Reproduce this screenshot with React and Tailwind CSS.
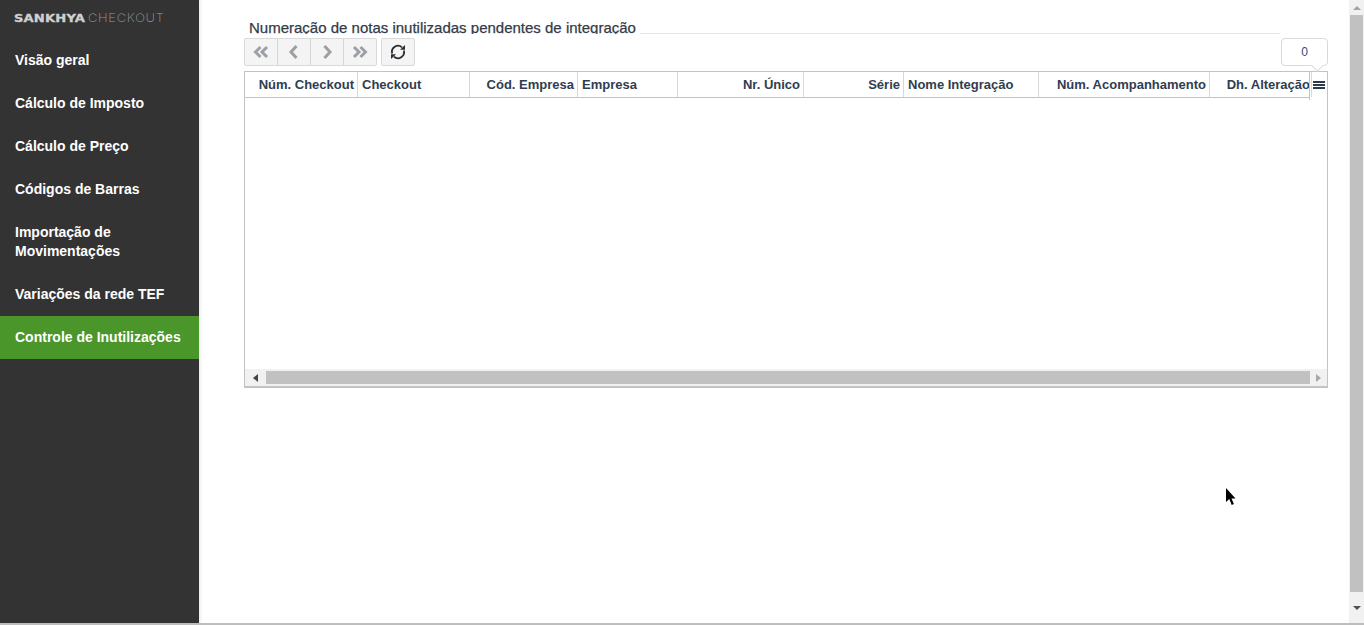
import React from 'react';

const navItems = [
  { label: 'Visão geral' },
  { label: 'Cálculo de Imposto' },
  { label: 'Cálculo de Preço' },
  { label: 'Códigos de Barras' },
  { label: 'Importação de Movimentações' },
  { label: 'Variações da rede TEF' },
  { label: 'Controle de Inutilizações', active: true },
];

const columns = [
  { label: 'Núm. Checkout', width: 'w-[113px]', align: 'text-right pr-[3px]' },
  { label: 'Checkout', width: 'w-[112px]', align: 'text-left pl-[4px]' },
  { label: 'Cód. Empresa', width: 'w-[108px]', align: 'text-right pr-[3px]' },
  { label: 'Empresa', width: 'w-[100px]', align: 'text-left pl-[4px]' },
  { label: 'Nr. Único', width: 'w-[126px]', align: 'text-right pr-[3px]' },
  { label: 'Série', width: 'w-[100px]', align: 'text-right pr-[3px]' },
  { label: 'Nome Integração', width: 'w-[135px]', align: 'text-left pl-[4px]' },
  { label: 'Núm. Acompanhamento', width: 'w-[171px]', align: 'text-right pr-[3px]' },
  { label: 'Dh. Alteração', width: 'w-[102px]', align: 'text-right pr-[1px]' },
];

const Chevron = ({ dir, double }) => (
  <svg width="18" height="16" viewBox="0 0 18 16" fill="none" stroke="#9c9fa3" strokeWidth="3" className={dir === 'left' ? '' : 'rotate-180'}>
    <path d={double ? 'M8.5 3 3.5 8l5 5' : 'M11.5 2 6 8l5.5 6'} />
    {double && <path d="M15 3 10 8l5 5" />}
  </svg>
);

const SyncIcon = () => (
  <svg width="16" height="16" viewBox="0 0 16 16" fill="none">
    <path d="M2.2 9.5A6 6 0 0 1 12 3.4" stroke="#2a2d33" strokeWidth="1.8" />
    <path d="M13.8 6.5A6 6 0 0 1 4 12.6" stroke="#2a2d33" strokeWidth="1.8" />
    <path d="M10 5.8h5V.9z" fill="#2a2d33" />
    <path d="M6 10.2H1v4.9z" fill="#2a2d33" />
  </svg>
);

const PageButton = ({ children, last }) => (
  <button className={`${last ? 'w-[32px]' : 'w-[33px] border-r border-[#d6d6d6]'} h-full flex items-center justify-center`}>
    {children}
  </button>
);

const Sidebar = () => (
  <aside className="w-[199px] shrink-0 bg-[#333333] shadow-[2px_0_3px_rgba(0,0,0,0.07)] flex flex-col">
    <div className="h-[39px] pl-[14px] pt-[11px] flex items-start leading-[14px]">
      <span className="inline-block w-[74px] origin-left scale-x-[1.25] font-['DejaVu_Sans',sans-serif] font-bold text-[10.5px] text-[#d0d0d0] tracking-[0.1px] [-webkit-text-stroke:0.3px_#d0d0d0]">SANKHYA</span>
      <span className="inline-block w-[76px] origin-left scale-x-[1.13] font-['Inter',sans-serif] font-extralight text-[#9a9a9a] tracking-[0.6px] text-[11.5px]">CHECKOUT</span>
    </div>
    <nav className="flex flex-col">
      {navItems.map((item) => (
        <a
          key={item.label}
          className={`px-[15px] py-[12px] text-[14px] leading-[19px] font-bold text-white ${item.active ? 'bg-[#4b962b]' : ''}`}
        >
          {item.label}
        </a>
      ))}
    </nav>
  </aside>
);

const Toolbar = () => (
  <div className="flex items-start justify-between mt-[4px] h-[33px]">
    <div className="flex gap-[4px]">
      <div className="h-[28px] flex bg-[#f4f4f4] border border-[#d9d9d9] rounded-[2px]">
        <PageButton><Chevron dir="left" double /></PageButton>
        <PageButton><Chevron dir="left" /></PageButton>
        <PageButton><Chevron dir="right" /></PageButton>
        <PageButton last><Chevron dir="right" double /></PageButton>
      </div>
      <button className="w-[34px] h-[28px] flex items-center justify-center bg-[#f4f4f4] border border-[#d9d9d9] rounded-[2px]">
        <SyncIcon />
      </button>
    </div>
    <div className="relative w-[47px] h-[28px] flex items-center justify-center bg-white border border-[#d9d9d9] rounded-[4px] text-[12px] text-[#2d4a7c]">
      0
      <span className="absolute -bottom-[5px] right-[5px] w-[9px] h-[9px] bg-white border-r border-b border-[#d9d9d9] rotate-45" />
    </div>
  </div>
);

const Grid = () => (
  <div className="h-[317px] border border-b-2 border-[#bfc4c8] flex flex-col">
    <div className="flex h-[26px] shrink-0">
      <div className="w-[1065px] flex border-b border-[#c4c4c4]">
        {columns.map((col) => (
          <div
            key={col.label}
            className={`${col.width} shrink-0 border-r border-[#d8d8d8] leading-[25px] text-[13px] font-bold text-[#2f3d4f] whitespace-nowrap ${col.align}`}
          >
            {col.label}
          </div>
        ))}
      </div>
      <div className="relative flex-1 flex items-center justify-center border-l border-[#c4c4c4] h-[28px] -ml-px">
        <div className="flex flex-col gap-[1px] -mt-[2px]">
          <span className="block w-[12px] h-[2px] bg-[#2b3a4d]" />
          <span className="block w-[12px] h-[2px] bg-[#2b3a4d]" />
          <span className="block w-[12px] h-[2px] bg-[#2b3a4d]" />
        </div>
      </div>
    </div>
    <div className="flex-1" />
    <div className="h-[17px] bg-[#f1f1f1] flex items-center">
      <span className="w-[21px] flex justify-center">
        <span className="block border-y-[4px] border-r-[5px] border-y-transparent border-r-[#444444]" />
      </span>
      <span className="block flex-1 h-[13px] bg-[#c1c1c1]" />
      <span className="w-[17px] flex justify-center">
        <span className="block border-y-[4px] border-l-[5px] border-y-transparent border-l-[#a8a8a8]" />
      </span>
    </div>
  </div>
);

const PageScrollbar = () => (
  <div className="w-[15px] shrink-0 bg-[#f1f1f1] flex flex-col items-center">
    <div className="h-[15px] flex items-center justify-center">
      <span className="block border-x-[4px] border-b-[4px] border-x-transparent border-b-[#a3a3a3]" />
    </div>
    <div className="w-[13px] h-[577px] bg-[#c1c1c1]" />
    <div className="flex-1 flex items-center justify-center">
      <span className="block border-x-[4px] border-t-[4px] border-x-transparent border-t-[#505050]" />
    </div>
  </div>
);

export default function App() {
  return (
    <div className="relative h-[625px] w-[1364px] overflow-hidden flex flex-col bg-white font-['Liberation_Sans',Arial,sans-serif]">
      <div className="flex-1 flex min-h-0">
        <Sidebar />
        <main className="flex-1 pl-[45px] pr-[21px] pt-[20px]">
          <div className="flex items-end h-[14px]">
            <div className="h-[14px] overflow-hidden pl-[5px] text-[15px] leading-[16px] text-[#333b47] whitespace-nowrap [-webkit-text-stroke:0.25px_#333b47]">
              Numeração de notas inutilizadas pendentes de integração
            </div>
            <div className="ml-[4px] w-[640px] border-b border-[#e4e4e4]" />
          </div>
          <Toolbar />
          <Grid />
        </main>
        <PageScrollbar />
      </div>
      <div className="h-[2px] bg-[#bdbdbd] shrink-0" />
      <svg className="absolute left-[1225px] top-[487px]" width="12" height="20" viewBox="0 0 12 20" fill="#000">
        <path d="M1 1v14l3.3-3 2.4 6 2.2-1-2.4-5.6H10.5z" />
      </svg>
    </div>
  );
}
